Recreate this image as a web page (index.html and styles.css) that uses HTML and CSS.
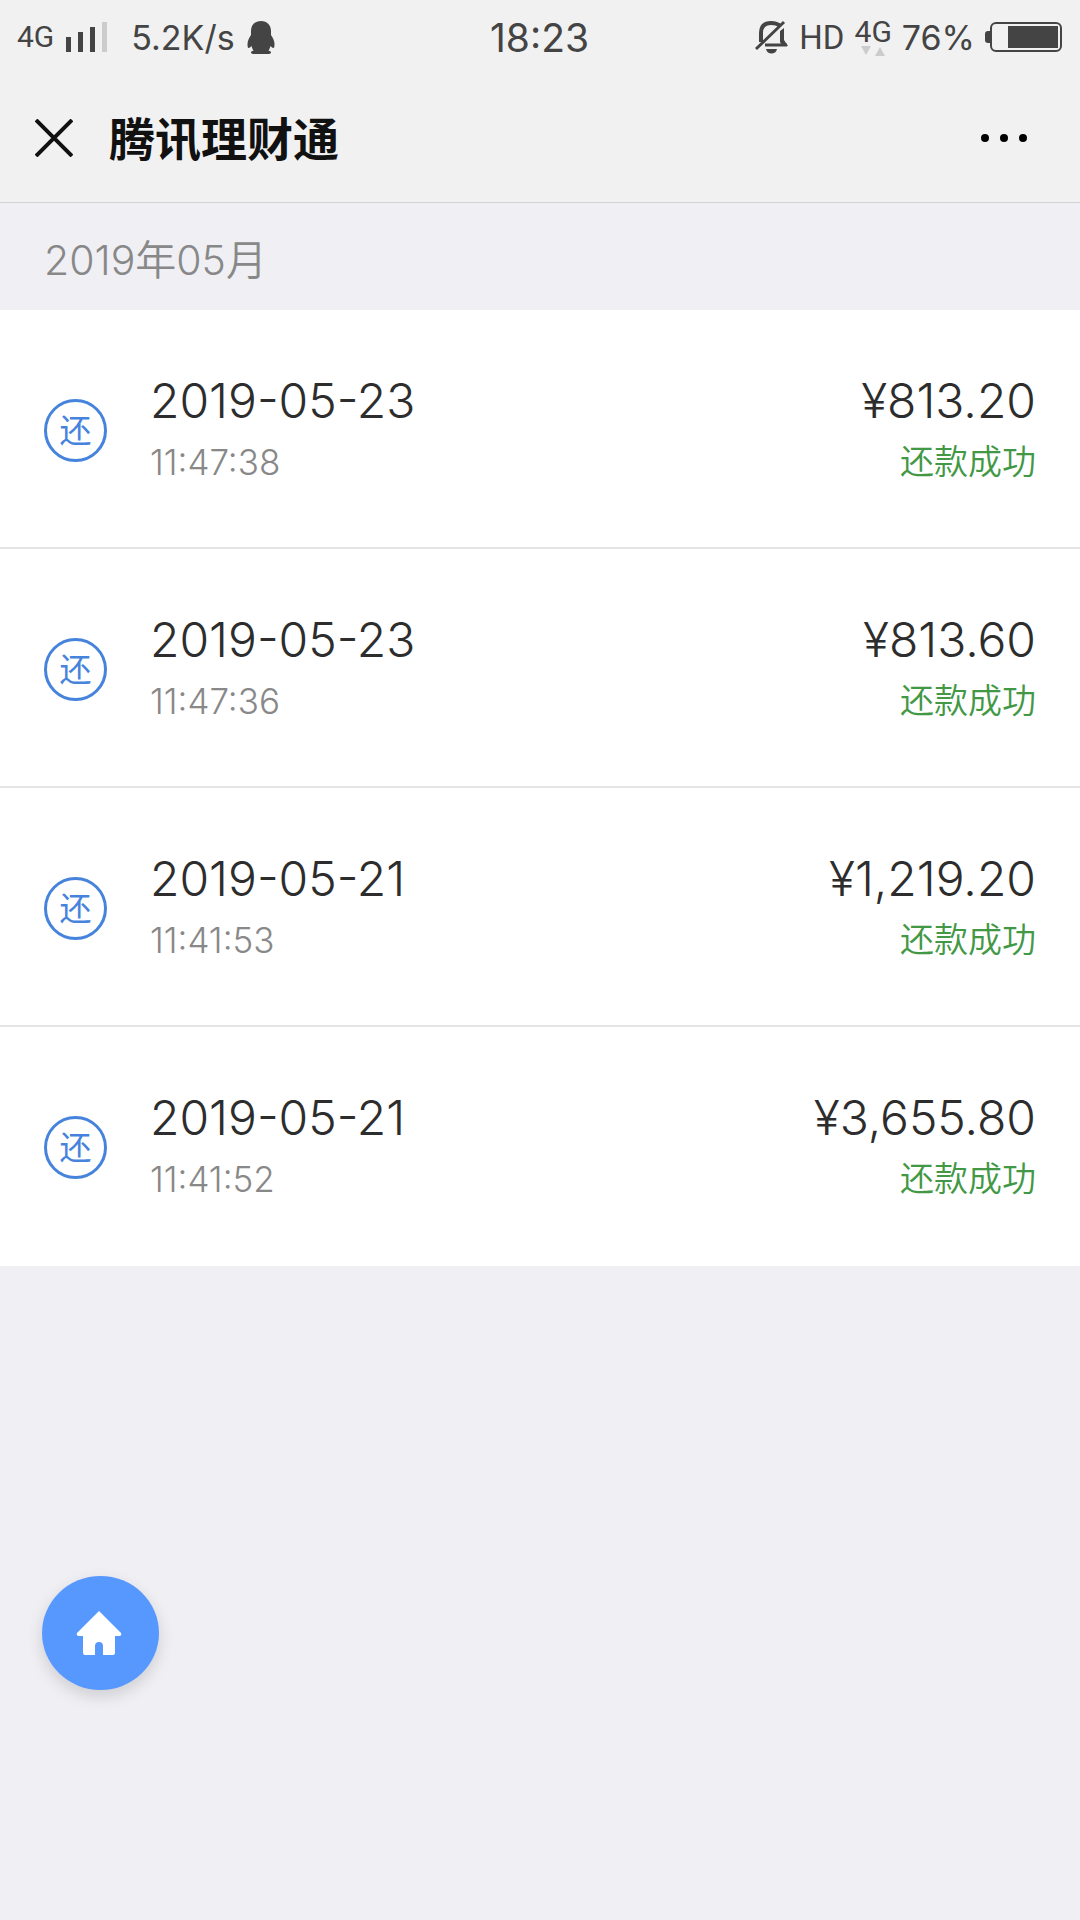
FILE: index.html
```html
<!DOCTYPE html>
<html lang="zh-CN">
<head>
<meta charset="utf-8">
<meta name="viewport" content="width=device-width, initial-scale=1">
<title>腾讯理财通</title>
<link rel="stylesheet" href="styles.css">
</head>
<body>
<header class="top">
  <div class="status">
    <div class="status-left">
      <span class="net">4G</span>
      <svg class="signal" width="42" height="30" viewBox="0 0 42 30" aria-hidden="true">
        <path d="M0 15h5v15H0zM12 10h5v20h-5zM24 5h5v25h-5z" fill="#444"/>
        <path d="M36 0h5v30h-5z" fill="#ccc"/>
      </svg>
      <span class="speed">5.2K/s</span>
      <svg class="penguin" width="28" height="33" viewBox="0 0 28 33" aria-hidden="true">
        <path d="M14 0C7.500 0 4 4.500 4 10v4C2 17 .5 20 .5 23c0 3 .5 4 1 4 1 0 2-1 3-2 .5 2 1 3 2 4.500-1.500.5-2.500 1-2.500 2 0 1 1.500 1.500 4 1.500h12c2.500 0 4-.5 4-1.500 0-1-1-1.500-2.500-2 1-1.500 1.500-2.500 2-4.500 1 1 2 2 3 2 .5 0 1-1 1-4 0-3-1.500-6-3.500-9v-4C24 4.500 20.500 0 14 0z" fill="#444"/>
      </svg>
    </div>
    <time class="clock">18:23</time>
    <div class="status-right">
      <svg class="mute" width="34" height="34" viewBox="0 0 34 34" fill="none" stroke="#444" stroke-width="4" aria-hidden="true">
        <path d="M6 22V13C6 6 10 3 16 3c4 0 7 1 9 3"/>
        <path d="M1 29 29 2" stroke-width="3"/>
        <path d="M25 11 29 8v12l4 6h-6l-2-4z" fill="#444" stroke="none"/>
        <path d="M10 25h22" stroke-width="3"/>
        <path d="M11 29h11c-1 6-10 6-11 0z" fill="#444" stroke="none"/>
      </svg>
      <span class="hd">HD</span>
      <span class="data">
        <span class="net">4G</span>
        <svg class="arrows" width="24" height="10" viewBox="0 0 24 10" aria-hidden="true">
          <path d="M0 0h10L5 9zM14 10h10L19 1z" fill="#ccc"/>
        </svg>
      </span>
      <span class="percent">76%</span>
      <svg class="battery" width="77" height="30" viewBox="0 0 77 30" aria-hidden="true">
        <path d="M5 9H3a3 3 0 0 0-3 3v6a3 3 0 0 0 3 3h2z" fill="#444"/>
        <rect x="6" y="1" width="70" height="28" rx="5" fill="none" stroke="#444" stroke-width="2"/>
        <path d="M23 4h50v22H23z" fill="#444"/>
      </svg>
    </div>
  </div>
  <nav class="bar">
    <button class="icon-btn" type="button" aria-label="关闭">
      <svg width="38" height="38" viewBox="0 0 38 38" aria-hidden="true"><path d="M1 1 37 37M37 1 1 37" stroke="#111" stroke-width="4"/></svg>
    </button>
    <h1 class="title">腾讯理财通</h1>
    <button class="icon-btn" type="button" aria-label="更多">
      <svg width="46" height="8" viewBox="0 0 46 8" aria-hidden="true"><g fill="#000"><circle cx="4" cy="4" r="4"/><circle cx="23" cy="4" r="4"/><circle cx="42" cy="4" r="4"/></g></svg>
    </button>
  </nav>
</header>
<main>
  <h2 class="month">2019年05月</h2>
  <ul class="list">
    <li class="row">
      <span class="badge">还</span>
      <div class="when"><span class="big">2019-05-23</span><span class="hour">11:47:38</span></div>
      <div class="sum"><span class="big">¥813.20</span><span class="state">还款成功</span></div>
    </li>
    <li class="row">
      <span class="badge">还</span>
      <div class="when"><span class="big">2019-05-23</span><span class="hour">11:47:36</span></div>
      <div class="sum"><span class="big">¥813.60</span><span class="state">还款成功</span></div>
    </li>
    <li class="row">
      <span class="badge">还</span>
      <div class="when"><span class="big">2019-05-21</span><span class="hour">11:41:53</span></div>
      <div class="sum"><span class="big">¥1,219.20</span><span class="state">还款成功</span></div>
    </li>
    <li class="row">
      <span class="badge">还</span>
      <div class="when"><span class="big">2019-05-21</span><span class="hour">11:41:52</span></div>
      <div class="sum"><span class="big">¥3,655.80</span><span class="state">还款成功</span></div>
    </li>
  </ul>
</main>
<a class="home" href="#" aria-label="首页">
  <svg width="46" height="46" viewBox="0 0 46 46" aria-hidden="true">
    <path d="M23 1 45 23q1 3-2 3h-4v17q0 2-2 2H27V36q0-4-4-4t-4 4v9H9q-2 0-2-2V26H3q-3 0-2-3z" fill="#fff"/>
  </svg>
</a>
</body>
</html>
```
FILE: styles.css
```css
* { box-sizing: border-box; }

body {
  margin: 0;
  min-height: 100vh;
  background: #efeff4;
  color: #2d2d2d;
  font-family: Inter, "Noto Sans CJK SC", sans-serif;
  font-weight: 300;
}

svg { display: block; flex: none; }

.top {
  background: #f1f1f1;
  border-bottom: 1px solid #d2d2d4;
}

.status {
  display: grid;
  grid-template-columns: 1fr auto 1fr;
  align-items: center;
  height: 74px;
  padding: 0 18px 0 17px;
  color: #444;
  font-weight: 400;
  white-space: nowrap;
}

.status-left,
.status-right {
  display: flex;
  align-items: center;
}

.status-right { justify-content: flex-end; gap: 10px; }

.net,
.hd { font-family: Roboto, sans-serif; }

.net { font-size: 30px; line-height: 28px; }
.signal { margin-left: 12px; }
.speed { margin-left: 23px; font-size: 34px; }
.penguin { margin-left: 12px; }
.clock { font-size: 39px; }
.hd { font-size: 33px; }
.percent { font-size: 34px; }

.data {
  display: flex;
  flex-direction: column;
  align-items: center;
}

.bar {
  display: flex;
  align-items: center;
  height: 128px;
  padding: 0 53px 0 35px;
}

.icon-btn {
  display: flex;
  padding: 0;
  border: 0;
  background: none;
}

.title {
  flex: 1;
  margin: 0 0 0 36px;
  padding-top: 2px;
  color: #111;
  font-size: 46px;
  font-weight: 700;
  line-height: 64px;
}

.month {
  margin: 0;
  padding: 8px 44px 0;
  color: #888;
  font-size: 41px;
  font-weight: 350;
  line-height: 99px;
}

.list {
  margin: 0;
  padding: 0;
  list-style: none;
  background: #fff;
}

.row {
  display: flex;
  align-items: center;
  padding: 59px 44px 55px;
  border-bottom: 2px solid #e5e5e5;
}

.row:last-child { border-bottom-color: #fff; }

.badge {
  display: flex;
  align-items: center;
  justify-content: center;
  width: 63px;
  height: 63px;
  border: 3px solid #4583dc;
  border-radius: 50%;
  color: #4583dc;
  font-size: 32px;
  line-height: 57px;
  font-weight: 400;
}

.when,
.sum {
  display: flex;
  flex-direction: column;
}

.when { flex: 1; margin-left: 43px; }
.sum { align-items: flex-end; }

.big { font-size: 48px; line-height: 63px; }
.hour { color: #888; font-size: 35px; line-height: 60px; }
.state { color: #429845; font-size: 34px; font-weight: 350; line-height: 60px; }

.home {
  position: fixed;
  left: 42px;
  bottom: 230px;
  display: flex;
  align-items: center;
  justify-content: center;
  width: 117px;
  height: 114px;
  padding-right: 4px;
  border-radius: 50%;
  background: #5798ff;
  box-shadow: 0 6px 16px rgba(0, 0, 0, 0.14);
}
```
